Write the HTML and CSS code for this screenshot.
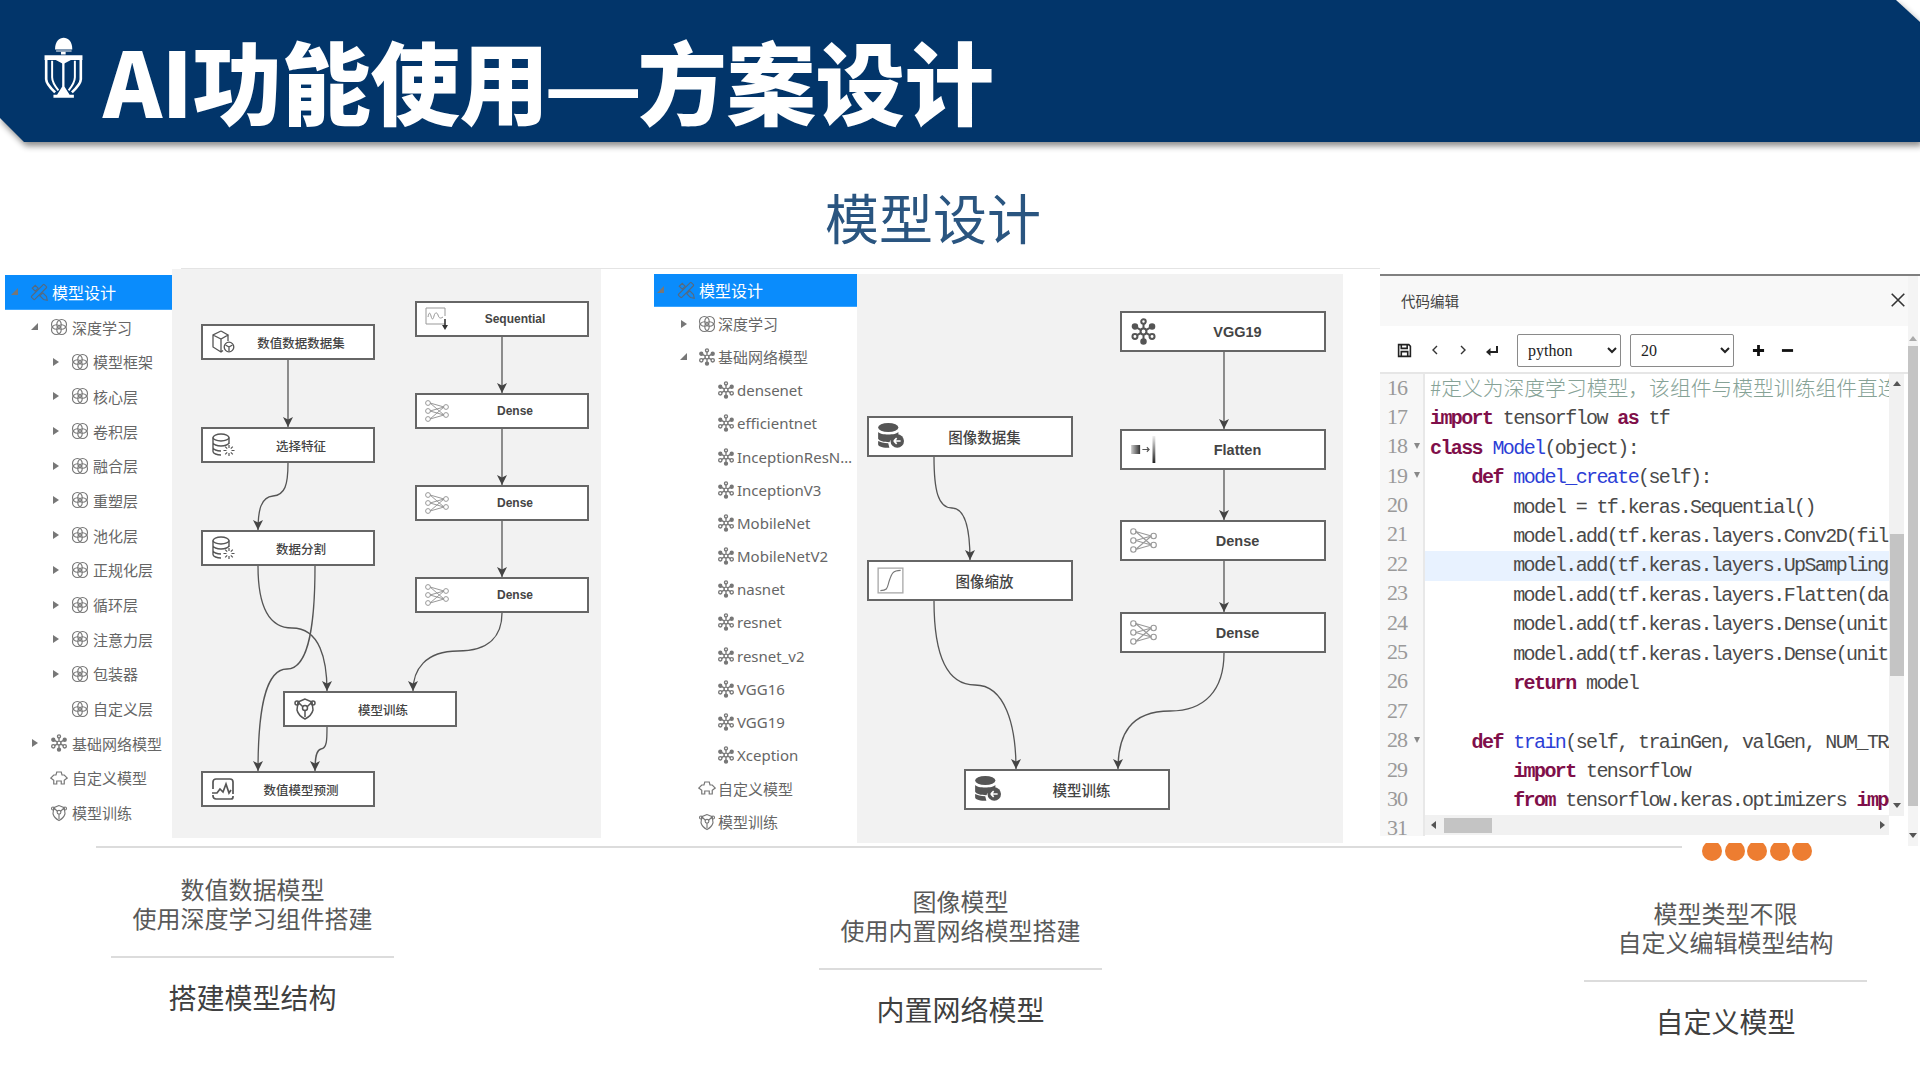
FILE: index.html
```html
<!DOCTYPE html>
<html lang="zh-CN">
<head>
<meta charset="utf-8">
<title>AI功能使用—方案设计</title>
<link rel="stylesheet" href="styles.css">
</head>
<body>
<svg class="defs" width="0" height="0" aria-hidden="true">
  <defs>
    <symbol id="i-design" viewBox="0 0 24 24"><g fill="none" stroke="currentColor" stroke-width="1.5"><rect x="9" y="0" width="6" height="24" rx="1" transform="rotate(45 12 12)"/><path d="M3 7 7 3l4 4-4 4z M13 17l4-4 5 5 1 5-5-1z"/></g></symbol>
    <symbol id="i-layer" viewBox="0 0 24 24"><g fill="none" stroke="currentColor" stroke-width="1.5"><circle cx="8.5" cy="8.5" r="6.5"/><circle cx="15.5" cy="8.5" r="6.5"/><circle cx="8.5" cy="15.5" r="6.5"/><circle cx="15.5" cy="15.5" r="6.5"/></g></symbol>
    <symbol id="i-net" viewBox="0 0 24 24"><g fill="none" stroke="currentColor" stroke-width="1.8"><circle cx="12" cy="12" r="2.6"/><path d="M12 9V5 M12 15v4 M9.5 10.5 6 8.5 M14.5 10.5 18 8.5 M9.5 13.5 6 15.5 M14.5 13.5 18 15.5"/><circle cx="12" cy="3.2" r="2"/><circle cx="12" cy="20.8" r="2" fill="currentColor"/><circle cx="4.4" cy="7.6" r="2" fill="currentColor"/><circle cx="19.6" cy="7.6" r="2" fill="currentColor"/><circle cx="4.4" cy="16.4" r="2.2"/><circle cx="19.6" cy="16.4" r="2.2"/></g></symbol>
    <symbol id="i-custom" viewBox="0 0 24 24"><path fill="none" stroke="currentColor" stroke-width="1.6" d="M9 4h6l1 4h3l4 4-4 3v5h-4v-4H9v4H5v-5l-4-3 4-4h3z"/></symbol>
    <symbol id="i-train" viewBox="0 0 24 24"><g fill="none" stroke="currentColor" stroke-width="1.5"><path d="M12 2 5 5 4 13c1 4 4 7 8 9 4-2 7-5 8-9l-1-8z"/><circle cx="12" cy="11" r="2.5"/><path d="M12 13.500V20 M9.800 9.700 5 5 M14.200 9.700 19 5"/><circle cx="4" cy="6" r="2"/><circle cx="20" cy="6" r="2"/></g></symbol>
    <symbol id="i-cube" viewBox="0 0 24 24"><g fill="none" stroke="currentColor" stroke-width="1.3"><path d="M10 1 2 5v12l8 5 2-1.500 M10 1l7 4-7 4-8-4 M10 9v13 M17 5v6"/><circle cx="18" cy="17" r="4.800"/><path d="M18 17v4 M18 17l-3.500-2 M18 17l3.500-2"/></g></symbol>
    <symbol id="i-dbgear" viewBox="0 0 24 24"><g fill="none" stroke="currentColor" stroke-width="1.400"><ellipse cx="10" cy="4.500" rx="8" ry="3.500"/><path d="M2 4.500v14c0 2 4 3.500 8 3.500 M18 4.500V11 M2 9.500c0 2 4 3.500 8 3.500s8-1.500 8-3.500 M2 14.500c0 2 4 3.500 8 3.500"/><path stroke-width="1.200" d="M18 12v3 M18 20v3 M12.500 17.500h3 M20.500 17.500h3 M14.200 13.700l2 2 M19.800 19.300l2 2 M14.200 21.300l2-2 M19.800 15.700l2-2"/></g></symbol>
    <symbol id="i-seq" viewBox="0 0 24 24"><g fill="none" stroke="#999" stroke-width="1"><path d="M20 17H1V1h19v8"/><path d="M3 10c1-5 2-5 3-1s2 4 3 0 3-4 4-1 2 4 5 2"/></g><path fill="none" stroke="#333" stroke-width="1.600" d="M20 12v8"/><path fill="#333" d="M17 18h6l-3 5z"/></symbol>
    <symbol id="i-dense" viewBox="0 0 24 24"><g fill="none" stroke="#999" stroke-width="1"><circle cx="3" cy="4" r="2.400"/><circle cx="3" cy="12" r="2.400"/><circle cx="3" cy="20" r="2.400"/><circle cx="21" cy="8" r="2.400"/><circle cx="21" cy="16" r="2.400"/><path d="M5 4 19 8 M5 4l14 12 M5 12l14-4 M5 12l14 4 M5 20 19 8 M5 20l14-4"/></g></symbol>
    <symbol id="i-wave" viewBox="0 0 24 24"><g fill="none" stroke="currentColor" stroke-width="1.700"><path d="M2 12V5a3 3 0 0 1 3-3h14a3 3 0 0 1 3 3v12 M22 19v1a2 2 0 0 1-2 2H5a3 3 0 0 1-3-3v-1"/><path d="M1 16h5l3-4 3 3 3-8 3 9 2-3"/></g></symbol>
    <symbol id="i-dbsolid" viewBox="0 0 24 24"><g fill="currentColor"><ellipse cx="10" cy="4" rx="9" ry="4"/><path d="M1 8c2 3 16 3 18 0v3c-1 1-2 2-4 2-2 1-3 2-4 4-5 0-9-1-10-3z M1 16c2 1 5 2 9 2l1 4c-5 0-10-1-10-3z"/><circle cx="18" cy="16" r="6"/></g><path stroke="#fff" stroke-width="1.500" fill="none" d="M15 16h6 M15 16l2.500-2.500 M15 16l2.500 2.500"/></symbol>
    <symbol id="i-curve" viewBox="0 0 24 24"><rect x="1" y="1" width="22" height="22" fill="none" stroke="#aaa" stroke-width="1.200"/><path d="M3 21c7 0 6-3 8-9s3-9 10-9" fill="none" stroke="#777" stroke-width="1"/></symbol>
    <symbol id="i-flatten" viewBox="0 0 24 24"><defs><linearGradient id="gr" x1="0" x2="1" y1="0" y2="0"><stop offset="0" stop-color="#ccc"/><stop offset="1" stop-color="#333"/></linearGradient><linearGradient id="gv" x1="0" x2="0" y1="0" y2="1"><stop offset="0" stop-color="#eee"/><stop offset="1" stop-color="#222"/></linearGradient></defs><rect x="1" y="8" width="8" height="8" fill="url(#gr)"/><path d="M11 12h6 M15 10l2 2-2 2" stroke="#555" fill="none"/><rect x="20" y="0" width="2.500" height="24" fill="url(#gv)"/></symbol>
  </defs>
</svg>

<header class="head-wrap">
  <div class="head">
    <svg class="logo" viewBox="133 50 115 185" aria-hidden="true">
      <path fill="#fff" d="M165 88C163 40 219 40 217 88Z"/>
      <rect fill="#fff" x="168" y="91" width="47" height="3"/>
      <rect fill="#fff" x="183" y="95" width="14" height="8"/>
      <path fill="#fff" d="M133 105H248V120H213L190 132 167 120H133Z"/>
      <g fill="none" stroke="#fff">
        <path stroke-width="8" d="M138 118V178Q138 192 165 218"/>
        <path stroke-width="8" d="M243 118V178Q243 192 216 218"/>
        <path stroke-width="6" d="M156 122V172Q156 188 175 212"/>
        <path stroke-width="6" d="M225 122V172Q225 188 206 212"/>
        <path stroke-width="7" d="M190 128V200"/>
      </g>
      <path fill="#fff" d="M190 195 209 225H222V234H160V225H171Z"/>
    </svg>
    <h1 class="title">AI功能使用<span class="dash">—</span>方案设计</h1>
  </div>
</header>

<h2 class="subtitle">模型设计</h2>
<div class="top-rule"></div>

<main class="panels">
  <section class="panel panel-a">
    <nav class="tree tree-a">
      <div class="row active lv0"><i class="ar open"></i><svg class="ic"><use href="#i-design"/></svg><span>模型设计</span></div>
      <div class="row lv1"><i class="ar open"></i><svg class="ic"><use href="#i-layer"/></svg><span>深度学习</span></div>
      <div class="row lv2"><i class="ar"></i><svg class="ic"><use href="#i-layer"/></svg><span>模型框架</span></div>
      <div class="row lv2"><i class="ar"></i><svg class="ic"><use href="#i-layer"/></svg><span>核心层</span></div>
      <div class="row lv2"><i class="ar"></i><svg class="ic"><use href="#i-layer"/></svg><span>卷积层</span></div>
      <div class="row lv2"><i class="ar"></i><svg class="ic"><use href="#i-layer"/></svg><span>融合层</span></div>
      <div class="row lv2"><i class="ar"></i><svg class="ic"><use href="#i-layer"/></svg><span>重塑层</span></div>
      <div class="row lv2"><i class="ar"></i><svg class="ic"><use href="#i-layer"/></svg><span>池化层</span></div>
      <div class="row lv2"><i class="ar"></i><svg class="ic"><use href="#i-layer"/></svg><span>正规化层</span></div>
      <div class="row lv2"><i class="ar"></i><svg class="ic"><use href="#i-layer"/></svg><span>循环层</span></div>
      <div class="row lv2"><i class="ar"></i><svg class="ic"><use href="#i-layer"/></svg><span>注意力层</span></div>
      <div class="row lv2"><i class="ar"></i><svg class="ic"><use href="#i-layer"/></svg><span>包装器</span></div>
      <div class="row lv2"><i class="ar none"></i><svg class="ic"><use href="#i-layer"/></svg><span>自定义层</span></div>
      <div class="row lv1"><i class="ar"></i><svg class="ic"><use href="#i-net"/></svg><span>基础网络模型</span></div>
      <div class="row lv1"><i class="ar none"></i><svg class="ic"><use href="#i-custom"/></svg><span>自定义模型</span></div>
      <div class="row lv1"><i class="ar none"></i><svg class="ic"><use href="#i-train"/></svg><span>模型训练</span></div>
    </nav>
    <div class="canvas canvas-a">
      <svg class="edges" viewBox="172 269 429 569" aria-hidden="true">
        <g fill="none" stroke="#555" stroke-width="1.300" marker-end="url(#ah)">
          <path d="M288 360V427"/>
          <path d="M288 463C288 485 285 495 273 496 261 497 258 510 258 530"/>
          <path d="M258 566C258 600 265 628 292 628 320 628 327 660 327 691"/>
          <path d="M315 566C315 620 310 669 287 669 265 669 258 710 258 771"/>
          <path d="M327 727C327 740 327 748 321 749 316 750 315 758 315 771"/>
          <path d="M502 337V393"/>
          <path d="M502 429V485"/>
          <path d="M502 521V577"/>
          <path d="M502 613C502 635 490 651 458 651 425 651 413 670 413 691"/>
        </g>
        <defs><marker id="ah" markerUnits="userSpaceOnUse" markerWidth="11" markerHeight="11" refX="10" refY="5" orient="auto"><path d="M0 0 10 5 0 10 2.500 5Z" fill="#444"/></marker></defs>
      </svg>
      <div class="node small na1"><svg class="nic"><use href="#i-cube"/></svg><span class="zh">数值数据数据集</span></div>
      <div class="node small na2"><svg class="nic"><use href="#i-dbgear"/></svg><span class="zh">选择特征</span></div>
      <div class="node small na3"><svg class="nic"><use href="#i-dbgear"/></svg><span class="zh">数据分割</span></div>
      <div class="node small na4"><svg class="nic"><use href="#i-seq"/></svg><span>Sequential</span></div>
      <div class="node small na5"><svg class="nic"><use href="#i-dense"/></svg><span>Dense</span></div>
      <div class="node small na6"><svg class="nic"><use href="#i-dense"/></svg><span>Dense</span></div>
      <div class="node small na7"><svg class="nic"><use href="#i-dense"/></svg><span>Dense</span></div>
      <div class="node small na8"><svg class="nic"><use href="#i-train"/></svg><span class="zh">模型训练</span></div>
      <div class="node small na9"><svg class="nic"><use href="#i-wave"/></svg><span class="zh">数值模型预测</span></div>
    </div>
  </section>

  <section class="panel panel-b">
    <nav class="tree tree-b">
      <div class="row active lv0"><i class="ar open"></i><svg class="ic"><use href="#i-design"/></svg><span>模型设计</span></div>
      <div class="row lv1"><i class="ar"></i><svg class="ic"><use href="#i-layer"/></svg><span>深度学习</span></div>
      <div class="row lv1"><i class="ar open"></i><svg class="ic"><use href="#i-net"/></svg><span>基础网络模型</span></div>
      <div class="row lv2"><i class="ar none"></i><svg class="ic"><use href="#i-net"/></svg><span>densenet</span></div>
      <div class="row lv2"><i class="ar none"></i><svg class="ic"><use href="#i-net"/></svg><span>efficientnet</span></div>
      <div class="row lv2"><i class="ar none"></i><svg class="ic"><use href="#i-net"/></svg><span class="clip">InceptionResNetV2</span></div>
      <div class="row lv2"><i class="ar none"></i><svg class="ic"><use href="#i-net"/></svg><span>InceptionV3</span></div>
      <div class="row lv2"><i class="ar none"></i><svg class="ic"><use href="#i-net"/></svg><span>MobileNet</span></div>
      <div class="row lv2"><i class="ar none"></i><svg class="ic"><use href="#i-net"/></svg><span>MobileNetV2</span></div>
      <div class="row lv2"><i class="ar none"></i><svg class="ic"><use href="#i-net"/></svg><span>nasnet</span></div>
      <div class="row lv2"><i class="ar none"></i><svg class="ic"><use href="#i-net"/></svg><span>resnet</span></div>
      <div class="row lv2"><i class="ar none"></i><svg class="ic"><use href="#i-net"/></svg><span>resnet_v2</span></div>
      <div class="row lv2"><i class="ar none"></i><svg class="ic"><use href="#i-net"/></svg><span>VGG16</span></div>
      <div class="row lv2"><i class="ar none"></i><svg class="ic"><use href="#i-net"/></svg><span>VGG19</span></div>
      <div class="row lv2"><i class="ar none"></i><svg class="ic"><use href="#i-net"/></svg><span>Xception</span></div>
      <div class="row lv1"><i class="ar none"></i><svg class="ic"><use href="#i-custom"/></svg><span>自定义模型</span></div>
      <div class="row lv1"><i class="ar none"></i><svg class="ic"><use href="#i-train"/></svg><span>模型训练</span></div>
    </nav>
    <div class="canvas canvas-b">
      <svg class="edges" viewBox="857 274 486 569" aria-hidden="true">
        <g fill="none" stroke="#555" stroke-width="1.300" marker-end="url(#ah)">
          <path d="M934 457C934 490 938 508 952 508 966 508 970 530 970 560"/>
          <path d="M934 601C934 650 945 685 975 685 1005 685 1016 725 1016 769"/>
          <path d="M1224 352V429"/>
          <path d="M1224 470V520"/>
          <path d="M1224 561V612"/>
          <path d="M1224 653C1224 690 1205 711 1170 711 1130 711 1118 735 1118 769"/>
        </g>
      </svg>
      <div class="node big nb1"><svg class="nic"><use href="#i-net"/></svg><span>VGG19</span></div>
      <div class="node big nb2"><svg class="nic"><use href="#i-flatten"/></svg><span>Flatten</span></div>
      <div class="node big nb3"><svg class="nic"><use href="#i-dense"/></svg><span>Dense</span></div>
      <div class="node big nb4"><svg class="nic"><use href="#i-dense"/></svg><span>Dense</span></div>
      <div class="node big nb5"><svg class="nic"><use href="#i-dbsolid"/></svg><span class="zh">图像数据集</span></div>
      <div class="node big nb6"><svg class="nic"><use href="#i-curve"/></svg><span class="zh">图像缩放</span></div>
      <div class="node big nb7"><svg class="nic"><use href="#i-dbsolid"/></svg><span class="zh">模型训练</span></div>
    </div>
  </section>

  <section class="editor">
    <div class="ed-main">
      <div class="ed-title"><span>代码编辑</span>
        <svg class="ed-close" viewBox="0 0 14 14" aria-hidden="true"><path d="M1.500 1.500 12.500 12.500 M12.500 1.500 1.500 12.500" stroke="#333" stroke-width="1.400" fill="none"/></svg>
      </div>
      <div class="ed-tools">
        <svg class="t-save" viewBox="0 0 14 14" aria-hidden="true"><path d="M1.500 1.500H11L12.500 3V12.500H1.500Z M4 1.500V5H9.500V1.500 M4 12.500V8H10V12.500" fill="none" stroke="#222" stroke-width="1.500"/></svg>
        <svg class="t-prev" viewBox="0 0 10 14" aria-hidden="true"><path d="M7 3 3 7l4 4" fill="none" stroke="#333" stroke-width="1.400"/></svg>
        <svg class="t-next" viewBox="0 0 10 14" aria-hidden="true"><path d="M3 3l4 4-4 4" fill="none" stroke="#333" stroke-width="1.400"/></svg>
        <svg class="t-enter" viewBox="0 0 14 14" aria-hidden="true"><path d="M12 3V9H3" fill="none" stroke="#222" stroke-width="2"/><path d="M5.500 5 1 9l4.500 4z" fill="#222"/></svg>
        <select class="sel sel-lang"><option>python</option></select>
        <select class="sel sel-size"><option>20</option></select>
        <svg class="t-plus" viewBox="0 0 14 14" aria-hidden="true"><path d="M7 1V13 M1 7H13" stroke="#111" stroke-width="3"/></svg>
        <svg class="t-minus" viewBox="0 0 14 14" aria-hidden="true"><path d="M1 7H13" stroke="#111" stroke-width="3"/></svg>
      </div>
      <div class="ed-body">
        <div class="gutter">
          <div class="ln">16</div><div class="ln">17</div><div class="ln fold">18</div><div class="ln fold">19</div><div class="ln">20</div><div class="ln">21</div><div class="ln">22</div><div class="ln">23</div><div class="ln">24</div><div class="ln">25</div><div class="ln">26</div><div class="ln">27</div><div class="ln fold">28</div><div class="ln">29</div><div class="ln">30</div><div class="ln">31</div>
        </div>
        <div class="code-col">
          <div class="code-row">
            <div class="code">
<div class="cl cm">#定义为深度学习模型，该组件与模型训练组件直连</div>
<div class="cl"><b>import</b> tensorflow <b>as</b> tf</div>
<div class="cl"><b>class</b> <u>Model</u>(object):</div>
<div class="cl">    <b>def</b> <u>model_create</u>(self):</div>
<div class="cl">        model = tf.keras.Sequential()</div>
<div class="cl">        model.add(tf.keras.layers.Conv2D(filters=32))</div>
<div class="cl hl">        model.add(tf.keras.layers.UpSampling2D(size=2))</div>
<div class="cl">        model.add(tf.keras.layers.Flatten(data_format=None))</div>
<div class="cl">        model.add(tf.keras.layers.Dense(units=64))</div>
<div class="cl">        model.add(tf.keras.layers.Dense(units=10))</div>
<div class="cl">        <b>return</b> model</div>
<div class="cl"> </div>
<div class="cl">    <b>def</b> <u>train</u>(self, trainGen, valGen, NUM_TRAIN):</div>
<div class="cl">        <b>import</b> tensorflow</div>
<div class="cl">        <b>from</b> tensorflow.keras.optimizers <b>import</b> Adam</div>
            </div>
            <div class="vbar"><i class="tri up"></i><div class="vthumb"></div><i class="tri down"></i></div>
          </div>
          <div class="hbar"><i class="tri left"></i><div class="hthumb"></div><i class="tri right"></i></div>
        </div>
      </div>
    </div>
    <div class="outer-bar"><i class="tri up pale"></i><div class="outer-thumb"></div><i class="tri down"></i></div>
  </section>
</main>

<div class="bottom-row">
  <div class="bottom-rule"></div>
  <div class="dots"><i></i><i></i><i></i><i></i><i></i></div>
</div>

<section class="captions">
  <article class="cap cap-a">
    <p class="cap-text">数值数据模型<br>使用深度学习组件搭建</p>
    <h3 class="cap-title">搭建模型结构</h3>
  </article>
  <article class="cap cap-b">
    <p class="cap-text">图像模型<br>使用内置网络模型搭建</p>
    <h3 class="cap-title">内置网络模型</h3>
  </article>
  <article class="cap cap-c">
    <p class="cap-text">模型类型不限<br>自定义编辑模型结构</p>
    <h3 class="cap-title">自定义模型</h3>
  </article>
</section>
</body>
</html>
```
FILE: styles.css
```css
* { box-sizing: border-box; }
html, body { margin: 0; padding: 0; }
body {
  width: 1920px;
  height: 1080px;
  overflow: hidden;
  background: #fff;
  font-family: "Noto Sans CJK SC", "Noto Sans", sans-serif;
  color: #595959;
}
.defs { position: absolute; }

/* header */
.head-wrap { height: 142px; filter: drop-shadow(2px 4px 3px rgba(0,0,0,.45)); }
.head {
  height: 142px;
  background: #02356a;
  clip-path: polygon(0 0, 1896px 0, 1920px 22px, 1920px 142px, 24px 142px, 0 118px);
  display: flex;
  align-items: flex-start;
  padding-left: 44px;
}
.logo { width: 39px; height: 61px; margin-top: 37px; flex: none; }
.title {
  margin: 26px 0 0 20px;
  font-size: 89.500px;
  line-height: 106px;
  font-weight: 900;
  color: #fff;
  white-space: nowrap;
  letter-spacing: -0.500px;
}
.dash { font-family: "Liberation Sans", sans-serif; font-weight: 700; }

.subtitle {
  margin: 0 0 0 825px;
  height: 126px;
  padding-top: 37px;
  font-size: 54px;
  line-height: 76px;
  font-weight: 400;
  color: #2a5580;
}
.top-rule { height: 1px; margin-left: 181px; width: 1199px; background: #e4e4e4; }

/* panels */
.panels { display: flex; align-items: flex-start; height: 577px; }
.panel { display: flex; }
.panel-a { margin-left: 5px; height: 569px; }
.panel-b { margin: 5px 0 0 53px; height: 569px; }
.tree-a { width: 167px; margin-top: 6px; }
.tree-b { width: 203px; }
.canvas { position: relative; background: #f2f2f2; height: 100%; }
.canvas-a { width: 429px; }
.canvas-b { width: 486px; }
.edges { position: absolute; left: 0; top: 0; width: 100%; height: 100%; }

.row { display: flex; align-items: center; white-space: nowrap; color: #666; font-size: 15px; overflow: hidden; }
.tree-a .row { height: 34.7px; gap: 10px; }
.tree-b .row { height: 33.2px; gap: 9px; }
.tree-a .row span { margin-left: -6px; }
.tree-b .row span { margin-left: -7px; font-family: "Noto Sans", "Noto Sans CJK SC", sans-serif; }
.row.active { background: #0a8cfc; color: #fff; font-size: 16px; border-bottom: 1px solid #3aa4ff; }
.row.active .ic { color: #566a80; }
.tree-a .lv0 { padding-left: 5px; }
.tree-a .lv1 { padding-left: 25px; }
.tree-a .lv2 { padding-left: 46px; }
.tree-b .lv0 { padding-left: 2px; }
.tree-b .lv0.active { gap: 11px; }
.tree-b .lv1 { padding-left: 25px; }
.tree-b .lv2 { padding-left: 44px; }
.clip { min-width: 0; overflow: hidden; text-overflow: ellipsis; }
.ar {
  width: 10px; height: 10px; flex: none; position: relative;
}
.ar::before {
  content: ""; position: absolute; left: 2px; top: 1px;
  border-left: 6px solid #777; border-top: 4px solid transparent; border-bottom: 4px solid transparent;
}
.ar.open::before {
  left: 1px; top: 1px;
  border-left: 7px solid transparent; border-top: 0; border-bottom: 7px solid #777;
}
.ar.none::before { display: none; }
.ic { width: 18px; height: 18px; flex: none; color: #777; }

/* diagram nodes */
.node {
  position: absolute;
  display: flex;
  align-items: center;
  background: #fff;
  border: 2px solid #666;
  color: #444;
}
.node span { flex: 1; text-align: center; font-family: "Liberation Sans", "Noto Sans CJK SC", sans-serif; font-weight: 700; padding-right: 6px; }
.node span.zh { font-family: "Noto Sans CJK SC", sans-serif; font-weight: 500; }
.nic { flex: none; color: #555; }
.small { width: 174px; height: 36px; padding-left: 8px; }
.small .nic { width: 24px; height: 24px; }
.small span { font-size: 12px; }
.small span.zh { font-size: 12.500px; }
.big { width: 206px; height: 41px; padding-left: 8px; }
.big .nic { width: 27px; height: 27px; }
.big span { font-size: 14.500px; }

.na1 { left: 29px; top: 55px; }
.na2 { left: 29px; top: 158px; }
.na3 { left: 29px; top: 261px; }
.na4 { left: 243px; top: 32px; }
.na5 { left: 243px; top: 124px; }
.na6 { left: 243px; top: 216px; }
.na7 { left: 243px; top: 308px; }
.na8 { left: 111px; top: 422px; }
.na9 { left: 29px; top: 502px; }

.nb1 { left: 263px; top: 37px; }
.nb2 { left: 263px; top: 155px; }
.nb3 { left: 263px; top: 246px; }
.nb4 { left: 263px; top: 338px; }
.nb5 { left: 10px; top: 142px; }
.nb6 { left: 10px; top: 286px; }
.nb7 { left: 107px; top: 495px; }

/* editor */
.editor {
  margin: 5px 0 0 37px;
  width: 540px;
  height: 572px;
  display: flex;
  border-top: 2px solid #808080;
}
.ed-main { width: 528px; }
.ed-title {
  height: 50px;
  padding: 0 2px 2px 21px;
  background: #f8f8f8;
  display: flex;
  align-items: center;
  justify-content: space-between;
  font-size: 14.500px;
  color: #444;
}
.ed-close { width: 16px; height: 16px; }
.ed-tools {
  height: 48px;
  display: flex;
  align-items: center;
  border-bottom: 2px solid #e6e6e6;
  padding: 2px 0 0 17px;
}
.t-save { width: 15px; height: 15px; }
.t-prev { width: 10px; height: 14px; margin-left: 18px; }
.t-next { width: 10px; height: 14px; margin-left: 18px; }
.t-enter { width: 14px; height: 14px; margin-left: 17px; }
.sel {
  height: 33px;
  background: #fff;
  border: 1px solid #8a8a8a;
  border-radius: 2px;
  color: #222;
  font-family: "Liberation Serif", serif;
  font-size: 16px;
  padding-left: 6px;
}
.sel-lang { width: 104px; margin-left: 18px; }
.sel-size { width: 104px; margin-left: 9px; }
.t-plus { width: 13px; height: 13px; margin-left: 18px; }
.t-minus { width: 13px; height: 13px; margin-left: 16px; }

.ed-body { display: flex; height: 462px; overflow: hidden; }
.gutter {
  width: 45px;
  flex: none;
  background: #f7f7f7;
  border-right: 2px solid #e8e8e8;
  margin-top: -1.500px;
  color: #9a9a9a;
  font-family: "Liberation Serif", serif;
  font-size: 22px;
  letter-spacing: -1px;
}
.ln { height: 29.400px; line-height: 29.400px; padding: 0 3px 0 7px; display: flex; justify-content: space-between; align-items: center; }
.ln.fold::after {
  content: ""; border-left: 3.500px solid transparent; border-right: 3.500px solid transparent; border-top: 6px solid #888;
}
.code-col { width: 483px; flex: none; display: flex; flex-direction: column; }
.code-row { height: 442px; display: flex; }
.code {
  width: 464px;
  flex: none;
  overflow: hidden;
  margin-top: 1px;
  font-family: "Liberation Mono", monospace;
  font-size: 20px;
  letter-spacing: -1.600px;
  color: #4a4a4a;
}
.cl { height: 29.400px; line-height: 29.400px; white-space: pre; padding-left: 5px; }
.cl b { color: #7f0f4a; font-weight: 700; }
.cl u { color: #2c3ed6; text-decoration: none; }
.cl.cm { color: #86a296; font-family: "Noto Sans CJK SC", sans-serif; font-size: 20.800px; font-weight: 300; letter-spacing: 0; line-height: 24px; }
.hl { background: #e8f2ff; }
.vbar { width: 15px; flex: none; background: #f1f1f1; display: flex; flex-direction: column; align-items: center; }
.vthumb { width: 14px; height: 142px; background: #c4c4c4; margin-top: 148px; }
.vbar .up { margin-top: 7px; }
.vbar .down { margin-top: auto; margin-bottom: 8px; }
.hbar { height: 20px; width: 464px; background: #f1f1f1; display: flex; align-items: center; padding: 0 4px 0 6px; margin-top: -1px; }
.hthumb { width: 48px; height: 15px; background: #c4c4c4; margin-left: 8px; }
.hbar .right { margin-left: auto; }
.tri { display: block; width: 0; height: 0; flex: none; border: 4px solid transparent; }
.tri.up { border-top: 0; border-bottom: 5px solid #555; }
.tri.down { border-bottom: 0; border-top: 5px solid #555; }
.tri.left { border-left: 0; border-right: 5px solid #555; }
.tri.right { border-right: 0; border-left: 5px solid #555; }
.tri.pale.up { border-bottom-color: #aaa; }
.outer-bar { width: 10px; height: 570px; background: #f4f4f4; display: flex; flex-direction: column; align-items: center; }
.outer-bar .up { margin-top: 60px; }
.outer-thumb { width: 10px; height: 460px; background: #c4c4c4; margin-top: 5px; }
.outer-bar .down { margin-top: 27px; }

/* bottom rule and dots */
.bottom-row { display: flex; height: 2px; align-items: flex-start; }
.bottom-rule { margin-left: 96px; width: 1586px; height: 2px; background: #dcdcdc; }
.dots { display: flex; gap: 2.500px; margin: -3px 0 0 20px; height: 18px; overflow: hidden; flex: none; }
.dots i { display: block; width: 20px; height: 20px; margin-top: -2px; border-radius: 50%; background: #ed7d31; }

/* captions */
.captions { display: flex; align-items: flex-start; }
.cap { width: 283px; text-align: center; }
.cap-a { margin: 26px 0 0 111px; }
.cap-b { margin: 37.500px 0 0 425px; }
.cap-c { margin: 49.500px 0 0 482px; }
.cap-text {
  margin: 0;
  padding-bottom: 24px;
  font-size: 24px;
  line-height: 29px;
  color: #595959;
  border-bottom: 2px solid #dcdcdc;
}
.cap-title { margin: 19px 0 0; font-size: 28px; line-height: 40px; font-weight: 400; color: #404040; }
```
